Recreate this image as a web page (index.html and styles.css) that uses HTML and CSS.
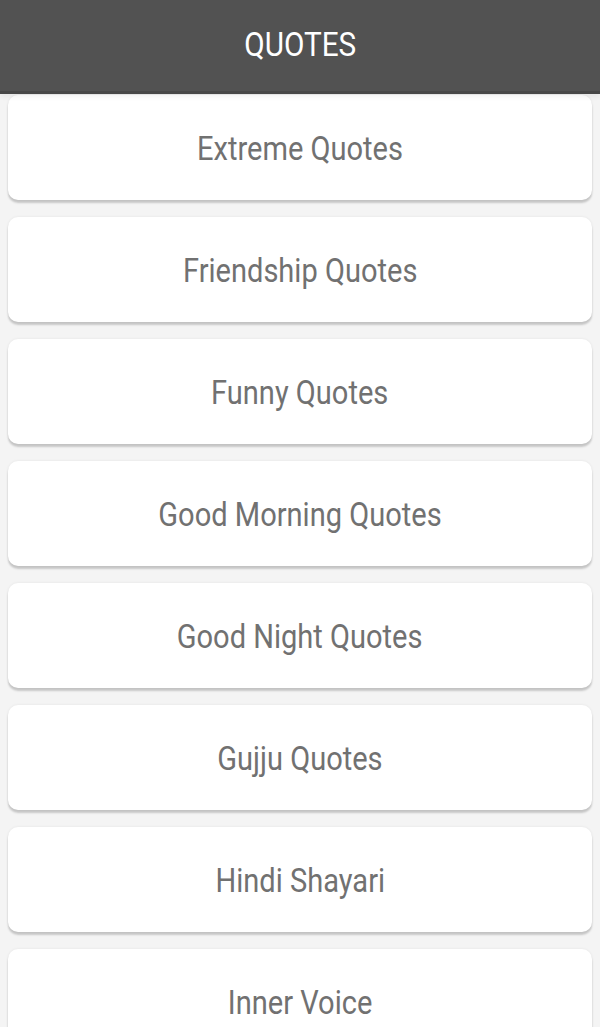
FILE: index.html
```html
<!DOCTYPE html>
<html lang="en">
<head>
    <meta charset="UTF-8">
    <meta name="viewport" content="width=device-width, initial-scale=1.0">
    <title>Quotes</title>
    <link rel="stylesheet" href="styles.css">
</head>
<body>
    <header class="toolbar">
        <h1><span>QUOTES</span></h1>
    </header>

    <main class="list">
        <div class="card"><span>Extreme Quotes</span></div>
        <div class="card"><span>Friendship Quotes</span></div>
        <div class="card"><span>Funny Quotes</span></div>
        <div class="card"><span>Good Morning Quotes</span></div>
        <div class="card"><span>Good Night Quotes</span></div>
        <div class="card"><span>Gujju Quotes</span></div>
        <div class="card"><span>Hindi Shayari</span></div>
        <div class="card"><span>Inner Voice</span></div>
    </main>
</body>
</html>
```

FILE: styles.css
```css
* {
    margin: 0;
    padding: 0;
    box-sizing: border-box;
    font-family: Roboto, 'Noto Sans', sans-serif;
}

html, body {
    height: 100%;
    overflow: hidden;
}

body {
    background-color: #f4f4f4;
}

.toolbar {
    position: relative;
    z-index: 1;
    height: 94px;
    background: #525252;
    border-bottom: 3px solid #484848;
    box-shadow: 0 3px 5px rgba(0, 0, 0, 0.05);
    display: flex;
    align-items: center;
    justify-content: center;
}

.toolbar h1 {
    color: #ffffff;
    font-weight: 400;
    font-size: 33px;
    margin-top: -2px;
}

.toolbar h1 span {
    display: inline-block;
    transform: scaleX(0.9);
}

.list {
    padding: 1px 8px 0;
}

.card {
    height: 105px;
    margin-bottom: 17px;
    background: #ffffff;
    border-radius: 10px;
    box-shadow: 0 3px 2px rgba(0, 0, 0, 0.18), 0 0 3px rgba(0, 0, 0, 0.07);
    display: flex;
    align-items: center;
    justify-content: center;
    color: #717171;
    font-size: 33px;
}

.card span {
    display: inline-block;
    transform: scaleX(0.88);
    white-space: nowrap;
    margin-top: 2px;
}
```
